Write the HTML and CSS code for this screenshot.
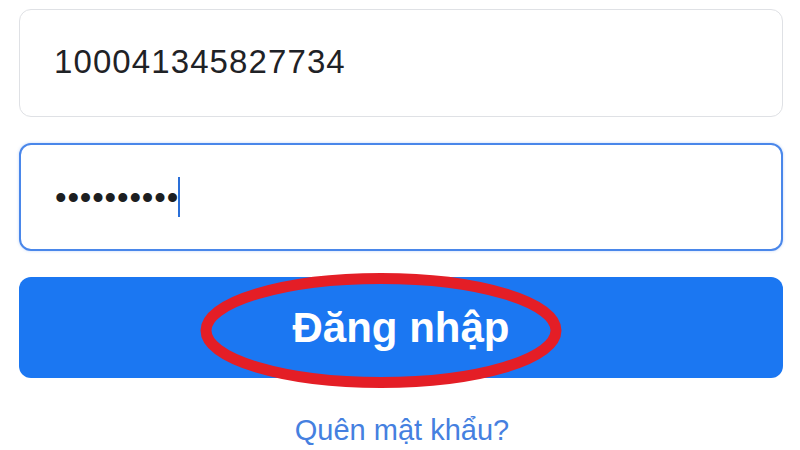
FILE: index.html
```html
<!DOCTYPE html>
<html lang="vi">
<head>
<meta charset="utf-8">
<title>Đăng nhập</title>
<link rel="stylesheet" href="styles.css">
</head>
<body>
<main class="login">
  <div class="field">
    <span class="value">100041345827734</span>
  </div>
  <div class="field field-focus">
    <span class="dots">••••••••••</span><span class="caret"></span>
  </div>
  <div class="btn-wrap">
    <button class="btn">Đăng nhập</button>
    <svg class="mark" width="362" height="115" viewBox="0 0 362 115">
      <ellipse cx="181" cy="57.5" rx="175" ry="52" fill="none" stroke="#e41e26" stroke-width="11"/>
    </svg>
  </div>
  <a class="forgot" href="#">Quên mật khẩu?</a>
</main>
</body>
</html>
```
FILE: styles.css
```css
html, body {
  margin: 0;
  padding: 0;
  background: #ffffff;
}
body {
  width: 800px;
  height: 450px;
  overflow: hidden;
  font-family: "Liberation Sans", Arial, sans-serif;
}
.login {
  display: flex;
  flex-direction: column;
  padding: 9px 17px 0 19px;
  gap: 26px;
}
.field {
  box-sizing: border-box;
  height: 108px;
  border: 1px solid #dfe1e5;
  border-radius: 12px;
  display: flex;
  align-items: center;
  padding-left: 34px;
  background: #fff;
}
.value {
  font-size: 33px;
  letter-spacing: 1.1px;
  color: #1f2226;
  position: relative;
  top: -1px;
}
.field-focus {
  border: 2px solid #4a87ea;
  box-shadow: 0 0 3px rgba(74, 135, 234, 0.35);
  padding-left: 34px;
}
.dots {
  font-size: 33px;
  letter-spacing: 0.85px;
  color: #1c1e21;
  position: relative;
  top: 1px;
}
.caret {
  display: inline-block;
  width: 2px;
  height: 40px;
  background: #2a6fd8;
  margin-left: -1px;
}
.btn-wrap {
  position: relative;
}
.btn {
  display: block;
  width: 100%;
  height: 101px;
  border: none;
  border-radius: 12px;
  background: #1b77f2;
  color: #fff;
  font-family: "Liberation Sans", Arial, sans-serif;
  font-weight: bold;
  font-size: 42px;
  line-height: 101px;
  padding: 0;
}
.mark {
  position: absolute;
  left: 181px;
  top: -4px;
}
.forgot {
  align-self: center;
  margin-top: 10px;
  margin-left: 2px;
  font-size: 29px;
  color: #4580e0;
  text-decoration: none;
}
```
